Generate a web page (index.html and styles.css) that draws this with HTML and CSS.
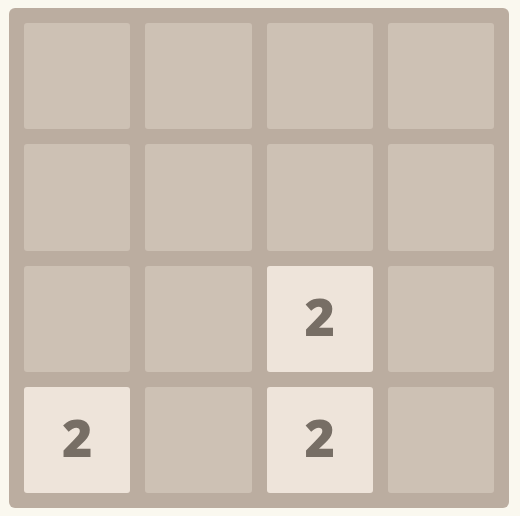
FILE: index.html
```html
<!DOCTYPE html>
<html lang="en">
<head>
    <meta charset="UTF-8">
    <meta name="viewport" content="width=device-width, initial-scale=1.0">
    <title>2048</title>
    <link rel="stylesheet" href="styles.css">
</head>
<body>
    <div class="board">
        <div class="cell"></div>
        <div class="cell"></div>
        <div class="cell"></div>
        <div class="cell"></div>

        <div class="cell"></div>
        <div class="cell"></div>
        <div class="cell"></div>
        <div class="cell"></div>

        <div class="cell"></div>
        <div class="cell"></div>
        <div class="cell tile-2">2</div>
        <div class="cell"></div>

        <div class="cell tile-2">2</div>
        <div class="cell"></div>
        <div class="cell tile-2">2</div>
        <div class="cell"></div>
    </div>
</body>
</html>
```

FILE: styles.css
```css
body {
    margin: 8px 9px;
    background: #faf8ef;
    font-family: "Open Sans", "Noto Sans", sans-serif;
}
.board {
    width: 500px;
    height: 500px;
    box-sizing: border-box;
    padding: 15px;
    background: #bbada0;
    border-radius: 6px;
    display: grid;
    grid-template-columns: repeat(4, 1fr);
    grid-template-rows: repeat(4, 1fr);
    gap: 15px;
}
.cell {
    background: #cdc1b4;
    border-radius: 3px;
    display: flex;
    align-items: center;
    justify-content: center;
    font-weight: 800;
    font-size: 52px;
    color: #776e65;
    line-height: 1;
}
.tile-2 {
    background: #eee4da;
    padding-bottom: 5px;
    box-sizing: border-box;
}
```
